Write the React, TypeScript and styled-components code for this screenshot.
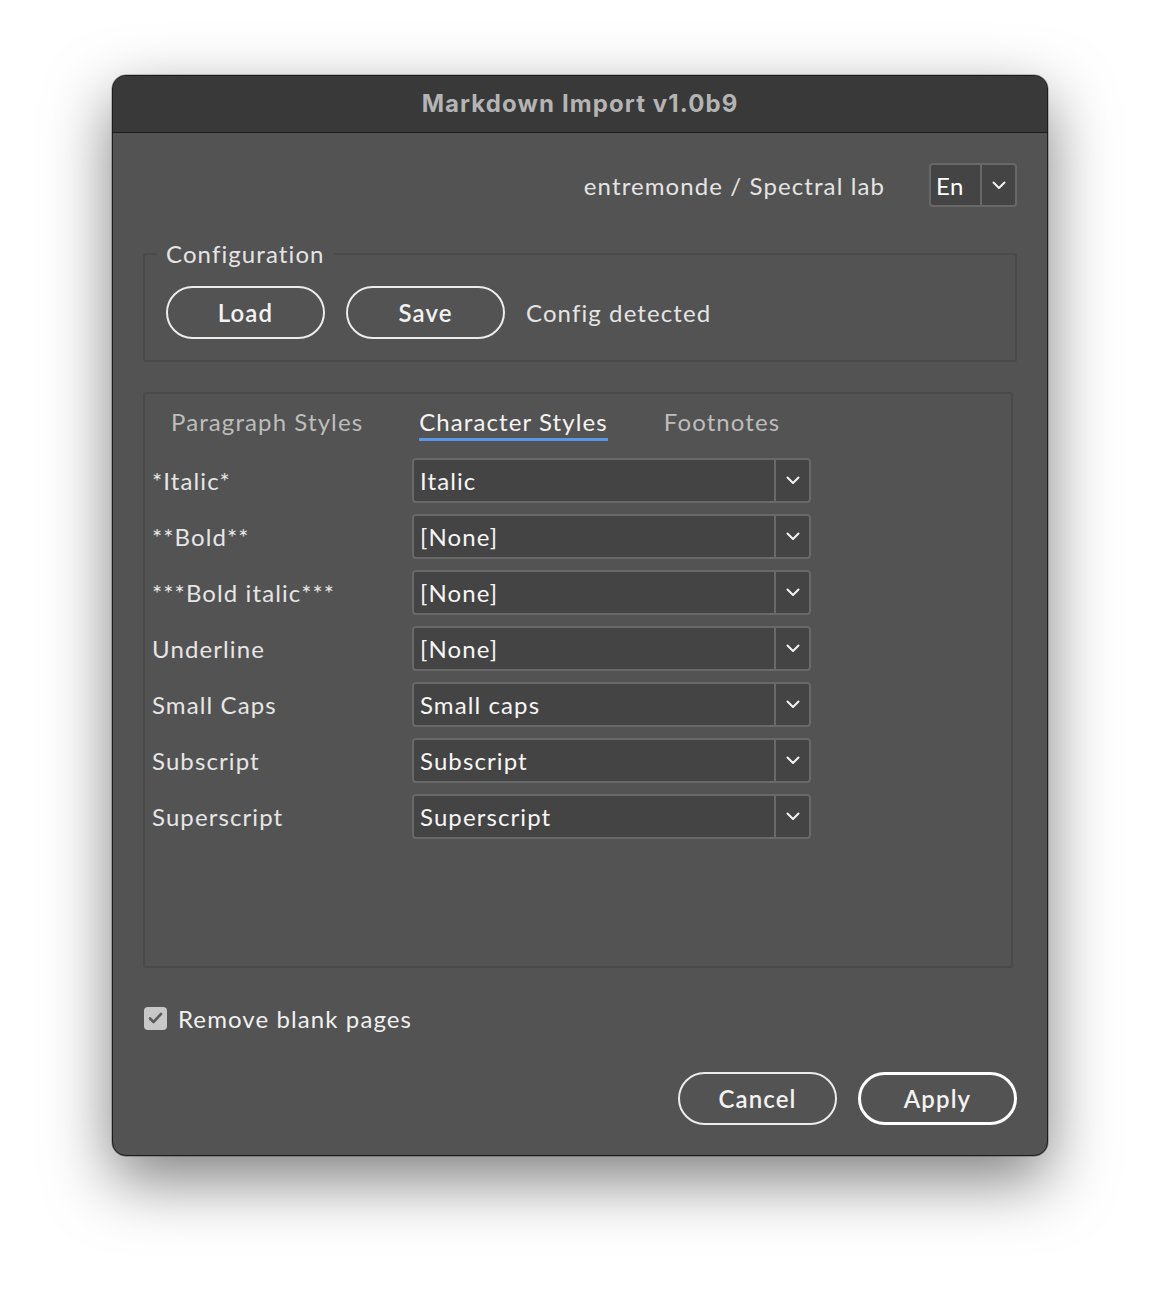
import React from "react";
import styled, { createGlobalStyle } from "styled-components";

const Global = createGlobalStyle`
  html, body { margin: 0; padding: 0; background: #ffffff; }
  body { font-family: Lato, "Noto Sans", sans-serif; }
  * { box-sizing: border-box; }
`;

const Page = styled.div`
  width: 1160px;
  height: 1304px;
  padding-top: 75px;
  display: flex;
  justify-content: center;
  align-items: flex-start;
  background: #ffffff;
`;

const Window = styled.div`
  width: 936px;
  height: 1081px;
  border-radius: 14px;
  border: 1px solid #1c1c1c;
  background: #535353;
  overflow: hidden;
  display: flex;
  flex-direction: column;
  box-shadow: 0 24px 64px rgba(0, 0, 0, 0.5), 0 0 0 0.5px rgba(0, 0, 0, 0.4);
`;

const TitleBar = styled.div`
  height: 57px;
  flex: none;
  background: #393939;
  border-bottom: 1px solid #1a1a1a;
  display: flex;
  align-items: center;
  justify-content: center;
  padding-bottom: 2px;
  font-family: Inter, "Liberation Sans", sans-serif;
  font-weight: 700;
  font-size: 24px;
  color: #b4b4b4;
  letter-spacing: 1.1px;
`;

const Body = styled.div`
  flex: 1;
  padding: 30px 30px 30px 30px;
  display: flex;
  flex-direction: column;
  color: #e8e8e8;
  font-size: 24px;
  letter-spacing: 1.1px;
`;

const HeaderRow = styled.div`
  display: flex;
  justify-content: flex-end;
  align-items: center;
  gap: 44px;
  height: 44px;
`;

const Credit = styled.span`
  color: #e4e4e4;
`;

const LangSelect = styled.div`
  width: 88px;
  height: 44px;
  border: 2px solid #686868;
  border-radius: 4px;
  background: #444444;
  display: flex;
`;

const LangValue = styled.div`
  width: 51px;
  border-right: 2px solid #686868;
  display: flex;
  align-items: center;
  padding-left: 5px;
  color: #ffffff;
  letter-spacing: 0.5px;
`;

const Arrow = styled.div`
  flex: 1;
  display: flex;
  align-items: center;
  justify-content: center;
`;

const Group = styled.fieldset`
  margin: 33px 0 0 0;
  padding: 18px 21px 21px 21px;
  border: 2px solid #4a4a4a;
  border-radius: 3px;
  display: flex;
  align-items: center;
  gap: 21px;
  min-width: 0;
`;

const Legend = styled.legend`
  padding: 0 9px;
  margin-left: -9px;
  line-height: 28px;
  color: #e4e4e4;
`;

const PillButton = styled.button<{ $primary?: boolean }>`
  width: 159px;
  height: 53px;
  border-radius: 27px;
  border: ${(p) => (p.$primary ? "3px solid #ffffff" : "2px solid #ececec")};
  background: transparent;
  color: #f2f2f2;
  font-family: Lato, "Noto Sans", sans-serif;
  font-size: 24px;
  font-weight: 600;
  letter-spacing: 1.1px;
  padding: 0;
  display: flex;
  align-items: center;
  justify-content: center;
`;

const Status = styled.span`
  color: #e4e4e4;
`;

const Panel = styled.div`
  margin-top: 30px;
  width: 870px;
  height: 576px;
  border: 2px solid #4a4a4a;
  border-radius: 3px;
  padding: 7px 0 0 7px;
  display: flex;
  flex-direction: column;
`;

const Tabs = styled.div`
  display: flex;
  gap: 56px;
  padding-left: 19px;
  height: 40px;
`;

const Tab = styled.div<{ $active?: boolean }>`
  height: 40px;
  display: flex;
  align-items: center;
  color: ${(p) => (p.$active ? "#f4f4f4" : "#bdbdbd")};
  border-bottom: 3px solid ${(p) => (p.$active ? "#5b97e6" : "transparent")};
  padding-top: 3px;
`;

const Rows = styled.div`
  margin-top: 17px;
  display: flex;
  flex-direction: column;
  gap: 11px;
`;

const Row = styled.div`
  display: flex;
  align-items: center;
  height: 45px;
`;

const RowLabel = styled.div`
  width: 260px;
  color: #e6e6e6;
`;

const Select = styled.div`
  width: 399px;
  height: 45px;
  border: 2px solid #696969;
  border-radius: 4px;
  background: #444444;
  display: flex;
`;

const SelectValue = styled.div`
  width: 362px;
  border-right: 2px solid #696969;
  display: flex;
  align-items: center;
  padding-left: 6px;
  color: #f6f6f6;
`;

const CheckRow = styled.label`
  margin-top: 37px;
  display: flex;
  align-items: center;
  gap: 11px;
  height: 26px;
  padding-left: 1px;
  color: #f0f0f0;
`;

const CheckBox = styled.span`
  width: 23px;
  height: 23px;
  border-radius: 4px;
  background: #c8c8c8;
  display: flex;
  align-items: center;
  justify-content: center;
`;

const Footer = styled.div`
  margin-top: 41px;
  display: flex;
  justify-content: flex-end;
  gap: 21px;
`;

const Chevron = () => (
  <svg width="14" height="9" viewBox="0 0 14 9" fill="none">
    <path d="M1.5 1.5 L7 7 L12.5 1.5" stroke="#f2f2f2" strokeWidth="2" strokeLinecap="round" strokeLinejoin="round" />
  </svg>
);

const rows: [string, string][] = [
  ["*Italic*", "Italic"],
  ["**Bold**", "[None]"],
  ["***Bold italic***", "[None]"],
  ["Underline", "[None]"],
  ["Small Caps", "Small caps"],
  ["Subscript", "Subscript"],
  ["Superscript", "Superscript"],
];

export default function App() {
  return (
    <>
      <Global />
      <Page>
        <Window>
          <TitleBar>Markdown Import v1.0b9</TitleBar>
          <Body>
            <HeaderRow>
              <Credit>entremonde / Spectral lab</Credit>
              <LangSelect>
                <LangValue>En</LangValue>
                <Arrow>
                  <Chevron />
                </Arrow>
              </LangSelect>
            </HeaderRow>
            <Group>
              <Legend>Configuration</Legend>
              <PillButton>Load</PillButton>
              <PillButton>Save</PillButton>
              <Status>Config detected</Status>
            </Group>
            <Panel>
              <Tabs>
                <Tab>Paragraph Styles</Tab>
                <Tab $active>Character Styles</Tab>
                <Tab>Footnotes</Tab>
              </Tabs>
              <Rows>
                {rows.map(([label, value]) => (
                  <Row key={label}>
                    <RowLabel>{label}</RowLabel>
                    <Select>
                      <SelectValue>{value}</SelectValue>
                      <Arrow>
                        <Chevron />
                      </Arrow>
                    </Select>
                  </Row>
                ))}
              </Rows>
            </Panel>
            <CheckRow>
              <CheckBox>
                <svg width="15" height="12" viewBox="0 0 15 12" fill="none">
                  <path d="M2 6.5 L5.5 10 L13 2" stroke="#5c5c5c" strokeWidth="2.6" strokeLinecap="round" strokeLinejoin="round" />
                </svg>
              </CheckBox>
              Remove blank pages
            </CheckRow>
            <Footer>
              <PillButton>Cancel</PillButton>
              <PillButton $primary>Apply</PillButton>
            </Footer>
          </Body>
        </Window>
      </Page>
    </>
  );
}
